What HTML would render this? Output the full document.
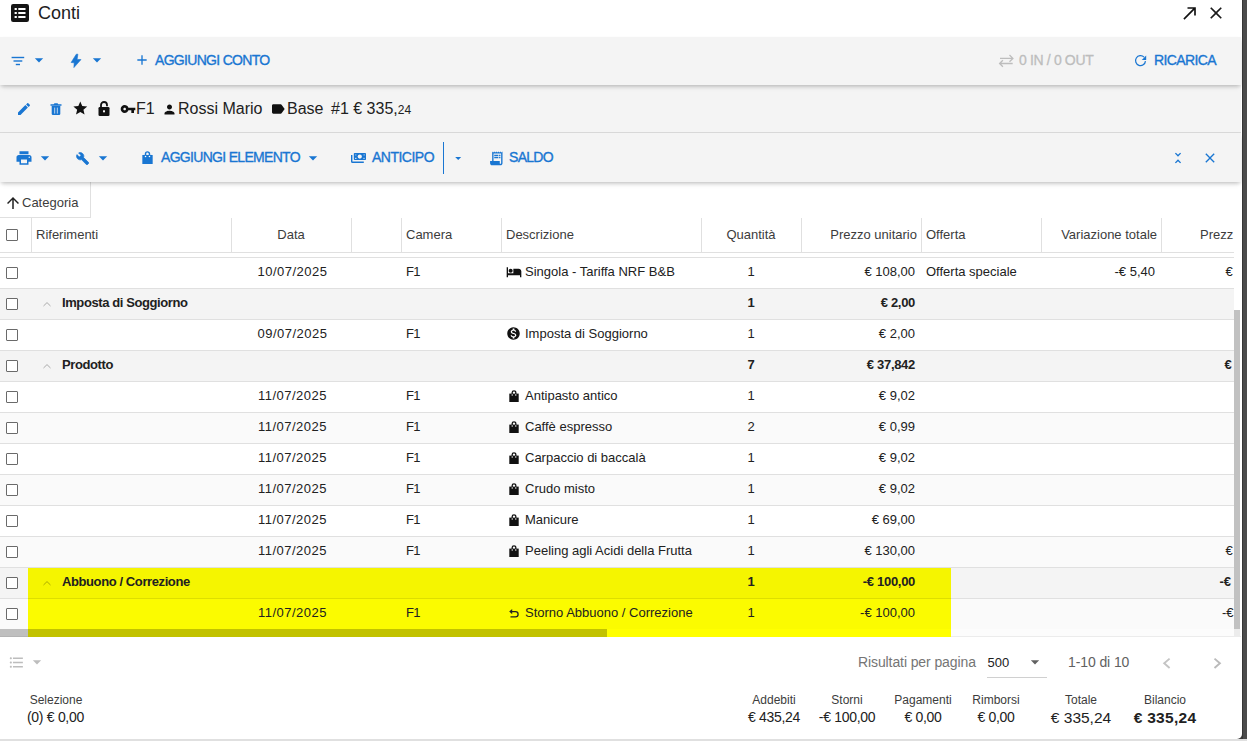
<!DOCTYPE html>
<html><head><meta charset="utf-8">
<style>
*{box-sizing:border-box;margin:0;padding:0}
html,body{width:1247px;height:741px;overflow:hidden;background:#e0e0e0}
body{font-family:"Liberation Sans",sans-serif;color:#212121;position:relative}
.strip{position:absolute;left:1242px;top:0;width:5px;height:739px;background:#4b4b4b;border-left:1px solid #363636}
.dlg{position:absolute;left:0;top:0;width:1242px;height:739px;background:#fff;border-bottom-right-radius:5px;overflow:hidden}
.abs{position:absolute;white-space:nowrap}
.bar{position:absolute;left:0;width:1241px;background:#f4f4f4}
.btn{font-size:14px;color:#1976d2;-webkit-text-stroke:0.35px #1976d2;line-height:16px}
svg{position:absolute;display:block}
.sep{position:absolute;top:218px;width:1px;height:34px;background:#e0e0e0}
.ht{position:absolute;top:227px;font-size:13px;color:#3c3c3c;white-space:nowrap;line-height:16px}
.row{position:absolute;left:0;width:1234px;height:31px;border-top:1px solid #e0e0e0}
.c{position:absolute;font-size:13px;white-space:nowrap;color:#212121;line-height:16px}
.b{font-weight:bold}
.cb{position:absolute;left:5.5px;width:12px;height:12px;border:1.4px solid #6a6a6a;border-radius:1px;background:#fff}
</style></head><body>
<div class="strip"></div>
<div style="position:absolute;left:1234px;top:731px;width:8px;height:8px;background:#3a3a3a"></div>
<div class="dlg">

<svg style="left:11px;top:4px" width="18" height="18" viewBox="0 0 18 18"><rect x="0" y="0" width="18" height="18" rx="2.2" fill="#141414"/><rect x="3.6" y="4" width="2.2" height="2" fill="#fff"/><rect x="7.3" y="4" width="7.2" height="2" fill="#fff"/><rect x="3.6" y="8" width="2.2" height="2" fill="#fff"/><rect x="7.3" y="8" width="7.2" height="2" fill="#fff"/><rect x="3.6" y="12" width="2.2" height="2" fill="#fff"/><rect x="7.3" y="12" width="7.2" height="2" fill="#fff"/></svg>
<div class="abs" style="left:38px;top:2px;font-size:18px;color:#212121;line-height:22px">Conti</div>
<svg style="left:1180px;top:3px" width="20" height="20" viewBox="0 0 24 24"><path fill="#111" d="M9 5v2h6.59L4 18.59 5.41 20 17 8.41V15h2V5z"/></svg>
<svg style="left:1206px;top:3px" width="20" height="20" viewBox="0 0 24 24"><path fill="#1a1a1a" d="M19 6.41L17.59 5 12 10.59 6.41 5 5 6.41 10.59 12 5 17.59 6.41 19 12 13.41 17.59 19 19 17.59 13.41 12z"/></svg>
<div class="bar" style="top:37px;height:48px;box-shadow:0 2px 4px -1px rgba(0,0,0,0.22),0 4px 6px -2px rgba(0,0,0,0.08);z-index:2"></div>
<div class="bar" style="top:85px;height:48px;border-bottom:1px solid #dadada"></div>
<div class="bar" style="top:133px;height:49px;box-shadow:0 2px 4px -1px rgba(0,0,0,0.22),0 4px 6px -2px rgba(0,0,0,0.08);z-index:2"></div>
<div style="position:absolute;left:0;top:0;width:1242px;height:741px;z-index:3">
<svg style="left:0;top:50px" width="30" height="20" viewBox="0 0 30 20"><rect x="11.6" y="6.8" width="12.6" height="1.4" fill="#1976d2"/><rect x="13.5" y="10.3" width="8.8" height="1.4" fill="#1976d2"/><rect x="15.8" y="13.8" width="4.2" height="1.4" fill="#1976d2"/></svg>
<svg style="left:29px;top:50px" width="20" height="20" viewBox="0 0 24 24"><path fill="#1976d2" d="M7 10l5 5 5-5z"/></svg>
<svg style="left:66px;top:50px" width="20" height="22" viewBox="0 0 20 22"><path fill="#1976d2" stroke="#1976d2" stroke-width="0.6" stroke-linejoin="round" d="M10.3 4.2L11.9 4.2L11.1 9.4L15 9.6L7.9 17.6L8.2 12.8L5.1 12.5Z"/></svg>
<svg style="left:87px;top:50px" width="20" height="20" viewBox="0 0 24 24"><path fill="#1976d2" d="M7 10l5 5 5-5z"/></svg>
<svg style="left:134px;top:52px" width="16" height="16" viewBox="0 0 24 24"><path fill="#1976d2" d="M19 13h-6v6h-2v-6H5v-2h6V5h2v6h6v2z"/></svg>
<div class="abs btn"  style="letter-spacing:-0.69px;left:155px;top:52px;">AGGIUNGI CONTO</div>
<svg style="left:990px;top:48px" width="30" height="24" viewBox="0 0 30 24"><path fill="none" stroke="#bdbdbd" stroke-width="1.3" d="M10 10.4H22.8M19.5 7L22.9 10.4 19.5 13.8M22.7 15.5H9.8M12.9 12.2L9.6 15.5 12.9 18.8"/></svg>
<div class="abs" style="left:1019px;top:52px;font-size:14px;color:#bdbdbd;letter-spacing:-0.35px;line-height:16px;-webkit-text-stroke:0.3px #bdbdbd">0 IN / 0 OUT</div>
<svg style="left:1132px;top:52px" width="17" height="17" viewBox="0 0 24 24"><path fill="none" stroke="#1976d2" stroke-width="1.75" d="M17 7.2A7 7 0 1 0 19 12.8"/><path fill="#1976d2" d="M13.8 11.2H20V5z"/></svg>
<div class="abs btn" style="letter-spacing:-0.61px;left:1154px;top:52px;">RICARICA</div>
<svg style="left:16px;top:100.7px" width="16" height="16" viewBox="0 0 24 24"><path fill="#1976d2" d="M20.71,7.04C21.1,6.65 21.1,6 20.71,5.63L18.37,3.29C18,2.9 17.35,2.9 16.96,3.29L15.12,5.12L18.87,8.87M3,17.25V21H6.75L17.81,9.93L14.06,6.18L3,17.25Z"/></svg>
<svg style="left:50px;top:102.5px" width="12" height="14" viewBox="0 0 12 14"><path fill="#1976d2" d="M0.5 1.2h3.2l0.8-0.9h3l0.8 0.9h3.2v1.6H0.5z"/><path fill="#1976d2" d="M1.7 3.1h8.6v7.6a1.2 1.2 0 0 1-1.2 1.2H2.9a1.2 1.2 0 0 1-1.2-1.2z"/><rect x="4" y="4.6" width="1.2" height="6" fill="#9cc3ea"/><rect x="6.8" y="4.6" width="1.2" height="6" fill="#9cc3ea"/></svg>
<svg style="left:71.7px;top:100.2px" width="16.6" height="16.6" viewBox="0 0 24 24"><path fill="#111" d="M12 17.27L18.18 21l-1.64-7.03L22 9.24l-7.19-.61L12 2 9.19 8.63 2 9.24l5.46 4.73L5.82 21z"/></svg>
<svg style="left:98px;top:101px" width="12" height="15" viewBox="0 0 12 15"><path fill="none" stroke="#111" stroke-width="1.8" d="M3 6.5V4a3 3 0 0 1 6 0v1.2"/><rect x="0.5" y="6" width="11" height="9" rx="1.3" fill="#111"/><rect x="5" y="9.3" width="2" height="2" fill="#f4f4f4"/></svg>
<svg style="left:120px;top:101px" width="16" height="16" viewBox="0 0 24 24"><path fill="#111" d="M12.65 10C11.83 7.67 9.61 6 7 6c-3.31 0-6 2.69-6 6s2.69 6 6 6c2.61 0 4.83-1.67 5.65-4H17v4h4v-4h2v-4H12.65zM7 14c-1.1 0-2-.9-2-2s.9-2 2-2 2 .9 2 2-.9 2-2 2z"/></svg>
<div class="abs" style="left:136px;top:99px;font-size:16px;color:#212121;line-height:18px;top:100px">F1</div>
<svg style="left:161.9px;top:101.5px" width="15" height="15" viewBox="0 0 24 24"><path fill="#111" d="M12 12c2.21 0 4-1.79 4-4s-1.79-4-4-4-4 1.79-4 4 1.79 4 4 4zm0 2c-2.67 0-8 1.34-8 4v2h16v-2c0-2.66-5.33-4-8-4z"/></svg>
<div class="abs" style="left:178px;top:99px;font-size:16px;color:#212121;line-height:18px;top:100px">Rossi Mario</div>
<svg style="left:270.2px;top:100.7px" width="16" height="16" viewBox="0 0 24 24"><path fill="#111" d="M17.63 5.84C17.27 5.33 16.67 5 16 5L5 5.01C3.9 5.01 3 5.9 3 7v10c0 1.1.9 1.99 2 1.99L16 19c.67 0 1.27-.33 1.63-.84L22 12l-4.37-6.16z"/></svg>
<div class="abs" style="left:287px;top:99px;font-size:16px;color:#212121;line-height:18px;top:100px">Base</div>
<div class="abs" style="left:331px;top:99px;font-size:16px;color:#212121;line-height:18px;top:100px">#1 € 335,<span style='font-size:12px'>24</span></div>
<svg style="left:15px;top:149px" width="18" height="18" viewBox="0 0 24 24"><path fill="#1976d2" d="M19 8H5c-1.66 0-3 1.34-3 3v6h4v4h12v-4h4v-6c0-1.66-1.34-3-3-3zm-3 11H8v-5h8v5zm3-7c-.55 0-1-.45-1-1s.45-1 1-1 1 .45 1 1-.45 1-1 1zm-1-9H6v4h12V3z"/></svg>
<svg style="left:35px;top:148px" width="20" height="20" viewBox="0 0 24 24"><path fill="#1976d2" d="M7 10l5 5 5-5z"/></svg>
<svg style="left:75.5px;top:151.5px" width="13.4" height="13.4" viewBox="0 0 24 24"><path stroke="#1976d2" stroke-width="1.3" fill="#1976d2" d="M22.7 19l-9.1-9.1c.9-2.3.4-5-1.5-6.9-2-2-5-2.4-7.4-1.3L9 6 6 9 1.6 4.7C.4 7.1.9 10.1 2.9 12.1c1.9 1.9 4.6 2.4 6.9 1.5l9.1 9.1c.4.4 1 .4 1.4 0l2.3-2.3c.5-.4.5-1.1.1-1.4z"/></svg>
<svg style="left:93px;top:148px" width="20" height="20" viewBox="0 0 24 24"><path fill="#1976d2" d="M7 10l5 5 5-5z"/></svg>
<svg style="left:142px;top:150.5px" width="11" height="13.75" viewBox="0 0 10 12.5"><path fill="none" stroke="#1976d2" stroke-width="1.3" d="M3.2 4V2.6a1.8 1.8 0 0 1 3.6 0V4"/><path fill="#1976d2" d="M0.3 3.6h9.4v8.9H0.3z"/><circle cx="3.2" cy="5" r="0.7" fill="#fff"/><circle cx="6.8" cy="5" r="0.7" fill="#fff"/></svg>
<div class="abs btn" style="letter-spacing:-0.69px;left:161px;top:149px;">AGGIUNGI ELEMENTO</div>
<svg style="left:303px;top:148px" width="20" height="20" viewBox="0 0 24 24"><path fill="#1976d2" d="M7 10l5 5 5-5z"/></svg>
<svg style="left:348px;top:148px" width="22" height="18" viewBox="0 0 22 18"><path fill="none" stroke="#1976d2" stroke-width="1.4" d="M3.7 7V13.5a0.8 0.8 0 0 0 0.8 0.8H15.8"/><rect x="5.8" y="5" width="12.2" height="7" rx="0.8" fill="#1976d2"/><circle cx="11.8" cy="8.6" r="2.1" fill="#f4f4f4"/><rect x="7.2" y="6.3" width="1.2" height="1.2" fill="#9cc3ea"/><rect x="7.2" y="9.8" width="1.2" height="1.2" fill="#f4f4f4"/><rect x="15.5" y="6.3" width="1.3" height="1.2" fill="#9cc3ea"/><rect x="15.2" y="9.8" width="1.6" height="1.2" fill="#9cc3ea"/></svg>
<div class="abs btn" style="letter-spacing:-0.51px;left:372px;top:149px;">ANTICIPO</div>
<div class="abs" style="left:442.9px;top:142px;width:1.2px;height:32px;background:#1976d2"></div>
<svg style="left:450.7px;top:150.9px" width="14.4" height="14.4" viewBox="0 0 24 24"><path fill="#1976d2" d="M7 10l5 5 5-5z"/></svg>
<svg style="left:487.7px;top:149.6px" width="16.6" height="16.6" viewBox="0 0 24 24"><path fill="#1976d2" d="M19.5 3.5L18 2l-1.5 1.5L15 2l-1.5 1.5L12 2l-1.5 1.5L9 2 7.5 3.5 6 2v14H3v3c0 1.66 1.34 3 3 3h12c1.66 0 3-1.34 3-3V2l-1.5 1.5zM19 19c0 .55-.45 1-1 1s-1-.45-1-1v-3H8V5h11v14zM9 7h6v2H9zm7 0h2v2h-2zm-7 3h6v2H9zm7 0h2v2h-2z"/></svg>
<div class="abs btn" style="letter-spacing:-0.7px;left:509px;top:149px;">SALDO</div>
<svg style="left:1170px;top:150px" width="16" height="16" viewBox="0 0 24 24"><path fill="#1976d2" d="M7.41 18.59L8.82 20 12 16.83 15.17 20l1.41-1.41L12 14l-4.59 4.59zm9.18-13.18L15.17 4 12 7.17 8.83 4 7.41 5.41 12 10l4.59-4.59z"/></svg>
<svg style="left:1202px;top:150px" width="16" height="16" viewBox="0 0 24 24"><path fill="#1976d2" d="M19 6.41L17.59 5 12 10.59 6.41 5 5 6.41 10.59 12 5 17.59 6.41 19 12 13.41 17.59 19 19 17.59 13.41 12z"/></svg>
</div>
<div class="abs" style="left:0;top:182px;width:91px;height:36px;border-right:1px solid #e0e0e0;border-bottom:1px solid #e0e0e0;background:#fff"></div>
<svg style="left:4px;top:194px" width="18" height="18" viewBox="0 0 24 24"><path fill="#212121" d="M4 12l1.41 1.41L11 7.83V20h2V7.83l5.58 5.59L20 12l-8-8-8 8z"/></svg>
<div class="abs" style="left:22px;top:195px;font-size:13px;color:#3c3c3c;line-height:16px">Categoria</div>
<div class="abs" style="left:0;top:252px;width:1234px;height:1px;background:#e0e0e0"></div>
<div class="sep" style="left:31px"></div>
<div class="sep" style="left:231px"></div>
<div class="sep" style="left:351px"></div>
<div class="sep" style="left:401px"></div>
<div class="sep" style="left:501px"></div>
<div class="sep" style="left:701px"></div>
<div class="sep" style="left:801px"></div>
<div class="sep" style="left:921px"></div>
<div class="sep" style="left:1041px"></div>
<div class="sep" style="left:1161px"></div>
<div class="cb" style="top:229px"></div>
<div class="ht" style="left:36px">Riferimenti</div>
<div class="ht" style="left:406px">Camera</div>
<div class="ht" style="left:506px">Descrizione</div>
<div class="ht" style="left:926px">Offerta</div>
<div class="ht" style="left:231px;width:120px;text-align:center">Data</div>
<div class="ht" style="left:701px;width:100px;text-align:center">Quantità</div>
<div class="ht" style="right:325px">Prezzo unitario</div>
<div class="ht" style="right:85px">Variazione totale</div>
<div class="ht" style="left:1200px">Prezz</div>
<div class="row" style="top:257px;background:#fff"></div>
<div class="cb" style="top:267px"></div>
<div class="c" style="left:232.5px;width:120px;text-align:center;top:264px;letter-spacing:0.5px">10/07/2025</div>
<div class="c" style="left:406px;top:264px;letter-spacing:-0.8px">F1</div>
<svg style="left:506px;top:263.5px" width="16" height="16" viewBox="0 0 24 24"><path fill="#111" d="M7 13c1.66 0 3-1.34 3-3S8.66 7 7 7s-3 1.34-3 3 1.34 3 3 3zm12-6h-8v7H3V5H1v15h2v-3h18v3h2v-9c0-2.21-1.79-4-4-4z"/></svg>
<div class="c" style="left:525px;top:264px">Singola - Tariffa NRF B&amp;B</div>
<div class="c" style="left:701px;width:100px;text-align:center;top:264px">1</div>
<div class="c" style="right:327px;top:264px">€ 108,00</div>
<div class="c" style="left:926px;top:264px">Offerta speciale</div>
<div class="c" style="right:87px;top:264px">-€ 5,40</div>
<div class="c" style="left:1225.5px;top:264px">€ 1</div>
<div class="row" style="top:288px;background:#f4f4f4"></div>
<div class="cb" style="top:298px"></div>
<svg style="left:42px;top:301px" width="10" height="6" viewBox="0 0 10 6"><path fill="none" stroke="rgba(0,0,0,0.3)" stroke-width="1" d="M1.5 5L5 1.6 8.5 5"/></svg>
<div class="c b" style="left:62px;top:295px;letter-spacing:-0.4px">Imposta di Soggiorno</div>
<div class="c b" style="left:701px;width:100px;text-align:center;top:295px">1</div>
<div class="c b" style="right:327px;top:295px;letter-spacing:-0.3px">€ 2,00</div>
<div class="row" style="top:319px;background:#fff"></div>
<div class="cb" style="top:329px"></div>
<div class="c" style="left:232.5px;width:120px;text-align:center;top:326px;letter-spacing:0.5px">09/07/2025</div>
<div class="c" style="left:406px;top:326px;letter-spacing:-0.8px">F1</div>
<svg style="left:506px;top:326px" width="15" height="15" viewBox="0 0 24 24"><path fill="#111" d="M12 2C6.48 2 2 6.48 2 12s4.48 10 10 10 10-4.48 10-10S17.52 2 12 2zm1.41 16.09V20h-2.67v-1.93c-1.71-.36-3.160-1.46-3.27-3.4h1.96c.1 1.05.82 1.87 2.650 1.87 1.96 0 2.4-.98 2.4-1.59 0-.83-.44-1.61-2.67-2.14-2.48-.6-4.18-1.62-4.18-3.67 0-1.72 1.39-2.84 3.11-3.21V4h2.67v1.95c1.86.45 2.79 1.86 2.85 3.39H14.3c-.05-1.11-.64-1.87-2.22-1.87-1.5 0-2.4.68-2.4 1.640 0 .84.65 1.39 2.67 1.91s4.18 1.39 4.18 3.91c-.01 1.83-1.38 2.83-3.12 3.16z"/></svg>
<div class="c" style="left:525px;top:326px">Imposta di Soggiorno</div>
<div class="c" style="left:701px;width:100px;text-align:center;top:326px">1</div>
<div class="c" style="right:327px;top:326px">€ 2,00</div>
<div class="row" style="top:350px;background:#f4f4f4"></div>
<div class="cb" style="top:360px"></div>
<svg style="left:42px;top:363px" width="10" height="6" viewBox="0 0 10 6"><path fill="none" stroke="rgba(0,0,0,0.3)" stroke-width="1" d="M1.5 5L5 1.6 8.5 5"/></svg>
<div class="c b" style="left:62px;top:357px;letter-spacing:-0.4px">Prodotto</div>
<div class="c b" style="left:701px;width:100px;text-align:center;top:357px">7</div>
<div class="c b" style="right:327px;top:357px;letter-spacing:-0.3px">€ 37,842</div>
<div class="c b" style="left:1224.5px;top:357px">€</div>
<div class="row" style="top:381px;background:#fff"></div>
<div class="cb" style="top:391px"></div>
<div class="c" style="left:232.5px;width:120px;text-align:center;top:388px;letter-spacing:0.5px">11/07/2025</div>
<div class="c" style="left:406px;top:388px;letter-spacing:-0.8px">F1</div>
<svg style="left:509px;top:389.7px" width="10" height="12.5" viewBox="0 0 10 12.5"><path fill="none" stroke="#111" stroke-width="1.3" d="M3.2 4V2.6a1.8 1.8 0 0 1 3.6 0V4"/><path fill="#111" d="M0.3 3.6h9.4v8.9H0.3z"/><circle cx="3.2" cy="5" r="0.7" fill="#fff"/><circle cx="6.8" cy="5" r="0.7" fill="#fff"/></svg>
<div class="c" style="left:525px;top:388px">Antipasto antico</div>
<div class="c" style="left:701px;width:100px;text-align:center;top:388px">1</div>
<div class="c" style="right:327px;top:388px">€ 9,02</div>
<div class="row" style="top:412px;background:#fafafa"></div>
<div class="cb" style="top:422px"></div>
<div class="c" style="left:232.5px;width:120px;text-align:center;top:419px;letter-spacing:0.5px">11/07/2025</div>
<div class="c" style="left:406px;top:419px;letter-spacing:-0.8px">F1</div>
<svg style="left:509px;top:420.7px" width="10" height="12.5" viewBox="0 0 10 12.5"><path fill="none" stroke="#111" stroke-width="1.3" d="M3.2 4V2.6a1.8 1.8 0 0 1 3.6 0V4"/><path fill="#111" d="M0.3 3.6h9.4v8.9H0.3z"/><circle cx="3.2" cy="5" r="0.7" fill="#fff"/><circle cx="6.8" cy="5" r="0.7" fill="#fff"/></svg>
<div class="c" style="left:525px;top:419px">Caffè espresso</div>
<div class="c" style="left:701px;width:100px;text-align:center;top:419px">2</div>
<div class="c" style="right:327px;top:419px">€ 0,99</div>
<div class="row" style="top:443px;background:#fff"></div>
<div class="cb" style="top:453px"></div>
<div class="c" style="left:232.5px;width:120px;text-align:center;top:450px;letter-spacing:0.5px">11/07/2025</div>
<div class="c" style="left:406px;top:450px;letter-spacing:-0.8px">F1</div>
<svg style="left:509px;top:451.7px" width="10" height="12.5" viewBox="0 0 10 12.5"><path fill="none" stroke="#111" stroke-width="1.3" d="M3.2 4V2.6a1.8 1.8 0 0 1 3.6 0V4"/><path fill="#111" d="M0.3 3.6h9.4v8.9H0.3z"/><circle cx="3.2" cy="5" r="0.7" fill="#fff"/><circle cx="6.8" cy="5" r="0.7" fill="#fff"/></svg>
<div class="c" style="left:525px;top:450px">Carpaccio di baccalà</div>
<div class="c" style="left:701px;width:100px;text-align:center;top:450px">1</div>
<div class="c" style="right:327px;top:450px">€ 9,02</div>
<div class="row" style="top:474px;background:#fafafa"></div>
<div class="cb" style="top:484px"></div>
<div class="c" style="left:232.5px;width:120px;text-align:center;top:481px;letter-spacing:0.5px">11/07/2025</div>
<div class="c" style="left:406px;top:481px;letter-spacing:-0.8px">F1</div>
<svg style="left:509px;top:482.7px" width="10" height="12.5" viewBox="0 0 10 12.5"><path fill="none" stroke="#111" stroke-width="1.3" d="M3.2 4V2.6a1.8 1.8 0 0 1 3.6 0V4"/><path fill="#111" d="M0.3 3.6h9.4v8.9H0.3z"/><circle cx="3.2" cy="5" r="0.7" fill="#fff"/><circle cx="6.8" cy="5" r="0.7" fill="#fff"/></svg>
<div class="c" style="left:525px;top:481px">Crudo misto</div>
<div class="c" style="left:701px;width:100px;text-align:center;top:481px">1</div>
<div class="c" style="right:327px;top:481px">€ 9,02</div>
<div class="row" style="top:505px;background:#fff"></div>
<div class="cb" style="top:515px"></div>
<div class="c" style="left:232.5px;width:120px;text-align:center;top:512px;letter-spacing:0.5px">11/07/2025</div>
<div class="c" style="left:406px;top:512px;letter-spacing:-0.8px">F1</div>
<svg style="left:509px;top:513.7px" width="10" height="12.5" viewBox="0 0 10 12.5"><path fill="none" stroke="#111" stroke-width="1.3" d="M3.2 4V2.6a1.8 1.8 0 0 1 3.6 0V4"/><path fill="#111" d="M0.3 3.6h9.4v8.9H0.3z"/><circle cx="3.2" cy="5" r="0.7" fill="#fff"/><circle cx="6.8" cy="5" r="0.7" fill="#fff"/></svg>
<div class="c" style="left:525px;top:512px">Manicure</div>
<div class="c" style="left:701px;width:100px;text-align:center;top:512px">1</div>
<div class="c" style="right:327px;top:512px">€ 69,00</div>
<div class="row" style="top:536px;background:#fafafa"></div>
<div class="cb" style="top:546px"></div>
<div class="c" style="left:232.5px;width:120px;text-align:center;top:543px;letter-spacing:0.5px">11/07/2025</div>
<div class="c" style="left:406px;top:543px;letter-spacing:-0.8px">F1</div>
<svg style="left:509px;top:544.7px" width="10" height="12.5" viewBox="0 0 10 12.5"><path fill="none" stroke="#111" stroke-width="1.3" d="M3.2 4V2.6a1.8 1.8 0 0 1 3.6 0V4"/><path fill="#111" d="M0.3 3.6h9.4v8.9H0.3z"/><circle cx="3.2" cy="5" r="0.7" fill="#fff"/><circle cx="6.8" cy="5" r="0.7" fill="#fff"/></svg>
<div class="c" style="left:525px;top:543px">Peeling agli Acidi della Frutta</div>
<div class="c" style="left:701px;width:100px;text-align:center;top:543px">1</div>
<div class="c" style="right:327px;top:543px">€ 130,00</div>
<div class="c" style="left:1225.5px;top:543px">€ 1</div>
<div class="row" style="top:567px;background:#f4f4f4"></div>
<div class="abs" style="left:28px;top:568px;width:923px;height:30px;background:#f5f500"></div>
<div class="cb" style="top:577px"></div>
<svg style="left:42px;top:580px" width="10" height="6" viewBox="0 0 10 6"><path fill="none" stroke="rgba(0,0,0,0.3)" stroke-width="1" d="M1.5 5L5 1.6 8.5 5"/></svg>
<div class="c b" style="left:62px;top:574px;letter-spacing:-0.4px">Abbuono / Correzione</div>
<div class="c b" style="left:701px;width:100px;text-align:center;top:574px">1</div>
<div class="c b" style="right:327px;top:574px;letter-spacing:-0.3px">-€ 100,00</div>
<div class="c b" style="left:1219.5px;top:574px">-€</div>
<div class="row" style="top:598px;background:#fafafa"></div>
<div class="abs" style="left:28px;top:598px;width:923px;height:31px;background:#fbfb00;border-top:1px solid #dede00"></div>
<div class="cb" style="top:608px"></div>
<div class="c" style="left:232.5px;width:120px;text-align:center;top:605px;letter-spacing:0.5px">11/07/2025</div>
<div class="c" style="left:406px;top:605px;letter-spacing:-0.8px">F1</div>
<svg style="left:509px;top:609px" width="11" height="10" viewBox="0 0 11 10"><path fill="none" stroke="#222" stroke-width="1.3" d="M2.5 2.6H6.5a2.6 2.6 0 0 1 0 5.2H1.5"/><path fill="#222" d="M0.2 2.6L3.2 0V5.2z"/></svg>
<div class="c" style="left:525px;top:605px">Storno Abbuono / Correzione</div>
<div class="c" style="left:701px;width:100px;text-align:center;top:605px">1</div>
<div class="c" style="right:327px;top:605px">-€ 100,00</div>
<div class="c" style="left:1222px;top:605px">-€ 1</div>
<div class="abs" style="left:1234px;top:253px;width:8px;height:376px;background:#fff"></div>
<div class="abs" style="left:1234px;top:257px;width:6px;height:53px;background:rgba(255,255,255,0.85)"></div>
<div class="abs" style="left:1234px;top:310px;width:6px;height:319px;background:#c1c1c1"></div>
<div class="abs" style="left:0;top:629px;width:1241px;height:8px;background:#fcfcfc;border-bottom:1px solid #ececec"></div>
<div class="abs" style="left:28px;top:629px;width:923px;height:8px;background:#ffff00"></div>
<div class="abs" style="left:0;top:629px;width:607px;height:8px;background:rgba(0,0,0,0.24)"></div>
<div class="abs" style="left:1234px;top:629px;width:6px;height:8px;background:#ececec"></div>
<svg style="left:8px;top:654px" width="17" height="17" viewBox="0 0 24 24"><path fill="#bdbdbd" d="M4 10.5c-.83 0-1.5.67-1.5 1.5s.67 1.5 1.5 1.5 1.5-.67 1.5-1.5-.67-1.5-1.5-1.5zm0-6c-.83 0-1.5.67-1.5 1.5S3.17 7.5 4 7.5 5.5 6.83 5.5 6 4.83 4.5 4 4.5zm0 12c-.83 0-1.5.68-1.5 1.5s.68 1.5 1.5 1.5 1.5-.68 1.5-1.5-.67-1.5-1.5-1.5zM7 19h14v-2H7v2zm0-6h14v-2H7v2zm0-8v2h14V5H7z"/></svg>
<svg style="left:27px;top:652px" width="20" height="20" viewBox="0 0 24 24"><path fill="#bdbdbd" d="M7 10l5 5 5-5z"/></svg>
<div class="abs" style="left:858px;top:654px;font-size:14px;color:#757575;line-height:16px;letter-spacing:-0.1px">Risultati per pagina</div>
<div class="abs" style="left:987.5px;top:655px;font-size:13px;color:#212121;line-height:16px">500</div>
<svg style="left:1025px;top:652px" width="20" height="20" viewBox="0 0 24 24"><path fill="#616161" d="M7 10l5 5 5-5z"/></svg>
<div class="abs" style="left:987px;top:677px;width:60px;height:1px;background:#d0d0d0"></div>
<div class="abs" style="left:1068px;top:654px;font-size:14px;color:#616161;line-height:16px;letter-spacing:-0.1px">1-10 di 10</div>
<svg style="left:1155px;top:650px" width="75" height="26" viewBox="0 0 75 26"><path fill="none" stroke="#c4c4c4" stroke-width="1.9" d="M14.6 8.6L9.2 13.3 14.6 18"/><path fill="none" stroke="#bababa" stroke-width="1.9" d="M59.5 8.6L64.9 13.3 59.5 18"/></svg>
<div class="abs" style="left:6.0px;width:100px;text-align:center;top:693px;font-size:12px;color:#3c3c3c;line-height:14px">Selezione</div>
<div class="abs" style="left:27px;top:709px;font-size:14px;color:#212121;line-height:16px;letter-spacing:-0.3px">(0) € 0,00</div>
<div class="abs" style="left:724.0px;width:100px;text-align:center;top:693px;font-size:12px;color:#3c3c3c;line-height:14px">Addebiti</div>
<div class="abs" style="left:724.0px;width:100px;text-align:center;top:709px;font-size:14px;color:#212121;line-height:16px;letter-spacing:-0.3px">€ 435,24</div>
<div class="abs" style="left:797.0px;width:100px;text-align:center;top:693px;font-size:12px;color:#3c3c3c;line-height:14px">Storni</div>
<div class="abs" style="left:797.0px;width:100px;text-align:center;top:709px;font-size:14px;color:#212121;line-height:16px;letter-spacing:-0.3px">-€ 100,00</div>
<div class="abs" style="left:873.0px;width:100px;text-align:center;top:693px;font-size:12px;color:#3c3c3c;line-height:14px">Pagamenti</div>
<div class="abs" style="left:873.0px;width:100px;text-align:center;top:709px;font-size:14px;color:#212121;line-height:16px;letter-spacing:-0.3px">€ 0,00</div>
<div class="abs" style="left:946.0px;width:100px;text-align:center;top:693px;font-size:12px;color:#3c3c3c;line-height:14px">Rimborsi</div>
<div class="abs" style="left:946.0px;width:100px;text-align:center;top:709px;font-size:14px;color:#212121;line-height:16px;letter-spacing:-0.3px">€ 0,00</div>
<div class="abs" style="left:1031.0px;width:100px;text-align:center;top:693px;font-size:12px;color:#3c3c3c;line-height:14px">Totale</div>
<div class="abs" style="left:1031.0px;width:100px;text-align:center;top:708px;font-size:15.5px;color:#212121;line-height:20px">€ 335,24</div>
<div class="abs" style="left:1115.0px;width:100px;text-align:center;top:693px;font-size:12px;color:#3c3c3c;line-height:14px">Bilancio</div>
<div class="abs" style="left:1115.0px;width:100px;text-align:center;top:708px;font-size:15.5px;font-weight:bold;color:#212121;line-height:20px;letter-spacing:0.3px">€ 335,24</div>
</div>
</body></html>
